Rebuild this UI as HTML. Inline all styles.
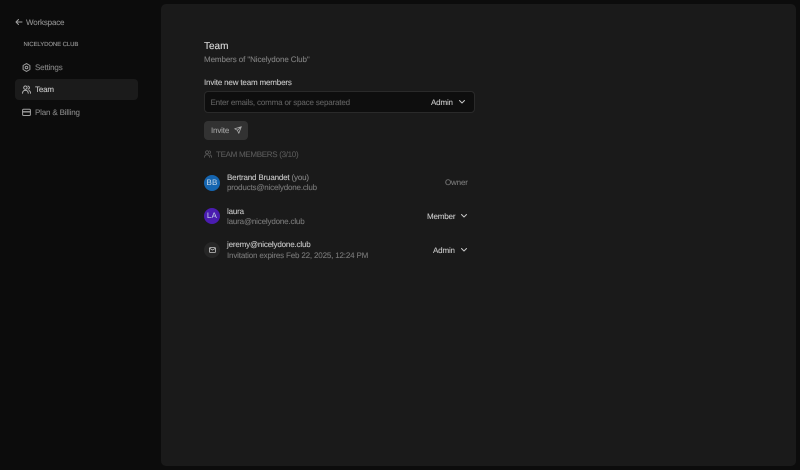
<!DOCTYPE html>
<html><head><meta charset="utf-8"><style>
html,body{margin:0;padding:0;width:800px;height:470px;overflow:hidden;background:#0c0c0c;font-family:"Liberation Sans",sans-serif;text-rendering:geometricPrecision}
.t{position:absolute;white-space:nowrap;line-height:12px;font-size:8px;letter-spacing:-.17px;margin-top:1px;-webkit-text-stroke:.1px}
svg{position:absolute;fill:none;stroke-linecap:round;stroke-linejoin:round}
.panel{position:absolute;left:161px;top:4px;width:635px;height:462px;background:#1a1a1a;border-radius:5px}
.active{position:absolute;left:15px;top:79px;width:123px;height:21px;background:#1b1b1b;border-radius:4px}
.input{position:absolute;left:204px;top:91px;width:269px;height:20px;background:#0e0e0e;border:1px solid #2a2a2a;border-radius:4px}
.btn{position:absolute;left:204px;top:121px;width:44px;height:19px;background:#323232;border-radius:4px}
.av{position:absolute;left:204px;width:16px;height:16px;border-radius:50%;color:#c8d8e8;font-size:8px;letter-spacing:.2px;line-height:16.500px;text-align:center}
</style></head><body>
<div class="panel"></div>
<div class="active"></div>

<svg style="left:15px;top:17.500px" width="8" height="8" viewBox="0 0 8 8" stroke="#a0a0a0" stroke-width="1"><path d="M7 4H1M3.500 1.500L1 4l2.500 2.500"/></svg>
<div class="t" style="left:26px;top:16px;color:#909090">Workspace</div>
<div class="t" style="left:23.500px;top:38px;color:#989898;font-size:6px;letter-spacing:-.1px">NICELYDONE CLUB</div>

<svg style="left:22px;top:62.500px" width="9" height="9" viewBox="0 0 9 9" stroke="#a0a0a0" stroke-width="1"><path d="M4.500.6l3.400 1.900v4L4.500 8.400 1.100 6.500v-4z"/><circle cx="4.500" cy="4.500" r="1.300"/></svg>
<div class="t" style="left:35px;top:61px;color:#848484">Settings</div>

<svg style="left:22px;top:85px" width="9" height="9" viewBox="0 0 9 9" stroke="#c0c0c0" stroke-width=".9"><circle cx="3.400" cy="2.600" r="1.700"/><path d="M.6 8.300c0-2 1.200-3 2.800-3s2.800 1 2.800 3M6 1c1 .3 1.400 1 1.400 1.600S7 3.900 6.200 4.200M7 5.500c1 .4 1.500 1.400 1.500 2.800"/></svg>
<div class="t" style="left:35px;top:83px;color:#c8c8c8">Team</div>

<svg style="left:22px;top:107.500px" width="9" height="9" viewBox="0 0 9 9" stroke="#a0a0a0" stroke-width="1"><rect x=".6" y="1.300" width="7.800" height="6.200" rx="1"/><path d="M.6 3.800h7.800" stroke-width="1.400"/></svg>
<div class="t" style="left:35px;top:106px;color:#848484">Plan &amp; Billing</div>

<div class="t" style="left:204px;top:40px;margin-top:0;color:#dcdcdc;font-size:10px;letter-spacing:0;line-height:13px">Team</div>
<div class="t" style="left:204px;top:53px;color:#808080;letter-spacing:-.1px">Members of "Nicelydone Club"</div>
<div class="t" style="left:204px;top:76px;color:#c8c8c8">Invite new team members</div>

<div class="input"></div>
<div class="t" style="left:210.500px;top:96px;color:#606060">Enter emails, comma or space separated</div>
<div class="t" style="left:431px;top:96px;color:#c8c8c8">Admin</div>
<svg style="left:458px;top:99px" width="8" height="6" viewBox="0 0 8 6" stroke="#c8c8c8" stroke-width="1"><path d="M1.500 1.500L4 4l2.500-2.500"/></svg>

<div class="btn"></div>
<div class="t" style="left:211px;top:124px;color:#a0a0a0">Invite</div>
<svg style="left:234px;top:126px" width="8" height="8" viewBox="0 0 8 8" stroke="#a8a8a8" stroke-width=".8"><path d="M7.300.7L.7 2.800l2.700 1.500 1.400 3zM3.400 4.300L7.300.7"/></svg>

<svg style="left:204px;top:150px" width="8" height="8" viewBox="0 0 9 9" stroke="#5c5c5c" stroke-width=".9"><circle cx="3.400" cy="2.600" r="1.700"/><path d="M.6 8.300c0-2 1.200-3 2.800-3s2.800 1 2.800 3M6 1c1 .3 1.400 1 1.400 1.600S7 3.900 6.200 4.200M7 5.500c1 .4 1.500 1.400 1.500 2.800"/></svg>
<div class="t" style="left:216px;top:148px;color:#5a5a5a;letter-spacing:-.3px">TEAM MEMBERS (3/10)</div>

<div class="av" style="top:175px;background:#1565b0">BB</div>
<div class="t" style="left:227px;top:171px;color:#c8c8c8">Bertrand Bruandet <span style="color:#848484">(you)</span></div>
<div class="t" style="left:227px;top:181px;color:#787878">products@nicelydone.club</div>
<div class="t" style="left:445px;top:176px;color:#787878">Owner</div>

<div class="av" style="top:208px;background:#4a1cb0">LA</div>
<div class="t" style="left:227px;top:205px;color:#c8c8c8">laura</div>
<div class="t" style="left:227px;top:215px;color:#787878">laura@nicelydone.club</div>
<div class="t" style="left:427px;top:210px;color:#c8c8c8">Member</div>
<svg style="left:460px;top:213px" width="8" height="6" viewBox="0 0 8 6" stroke="#c8c8c8" stroke-width="1"><path d="M1.500 1.500L4 4l2.500-2.500"/></svg>

<div class="av" style="top:242px;background:#262626"></div>
<svg style="left:208.500px;top:247px" width="7" height="6" viewBox="0 0 7 6" stroke="#c8c8c8" stroke-width=".8"><rect x=".5" y=".6" width="6" height="4.800" rx=".7"/><path d="M.7 1.300L3.500 3.100l2.800-1.800"/></svg>
<div class="t" style="left:227px;top:238px;color:#c8c8c8">jeremy@nicelydone.club</div>
<div class="t" style="left:227px;top:249px;color:#787878">Invitation expires Feb 22, 2025, 12:24 PM</div>
<div class="t" style="left:433px;top:244px;color:#c8c8c8">Admin</div>
<svg style="left:460px;top:247px" width="8" height="6" viewBox="0 0 8 6" stroke="#c8c8c8" stroke-width="1"><path d="M1.500 1.500L4 4l2.500-2.500"/></svg>
</body></html>
